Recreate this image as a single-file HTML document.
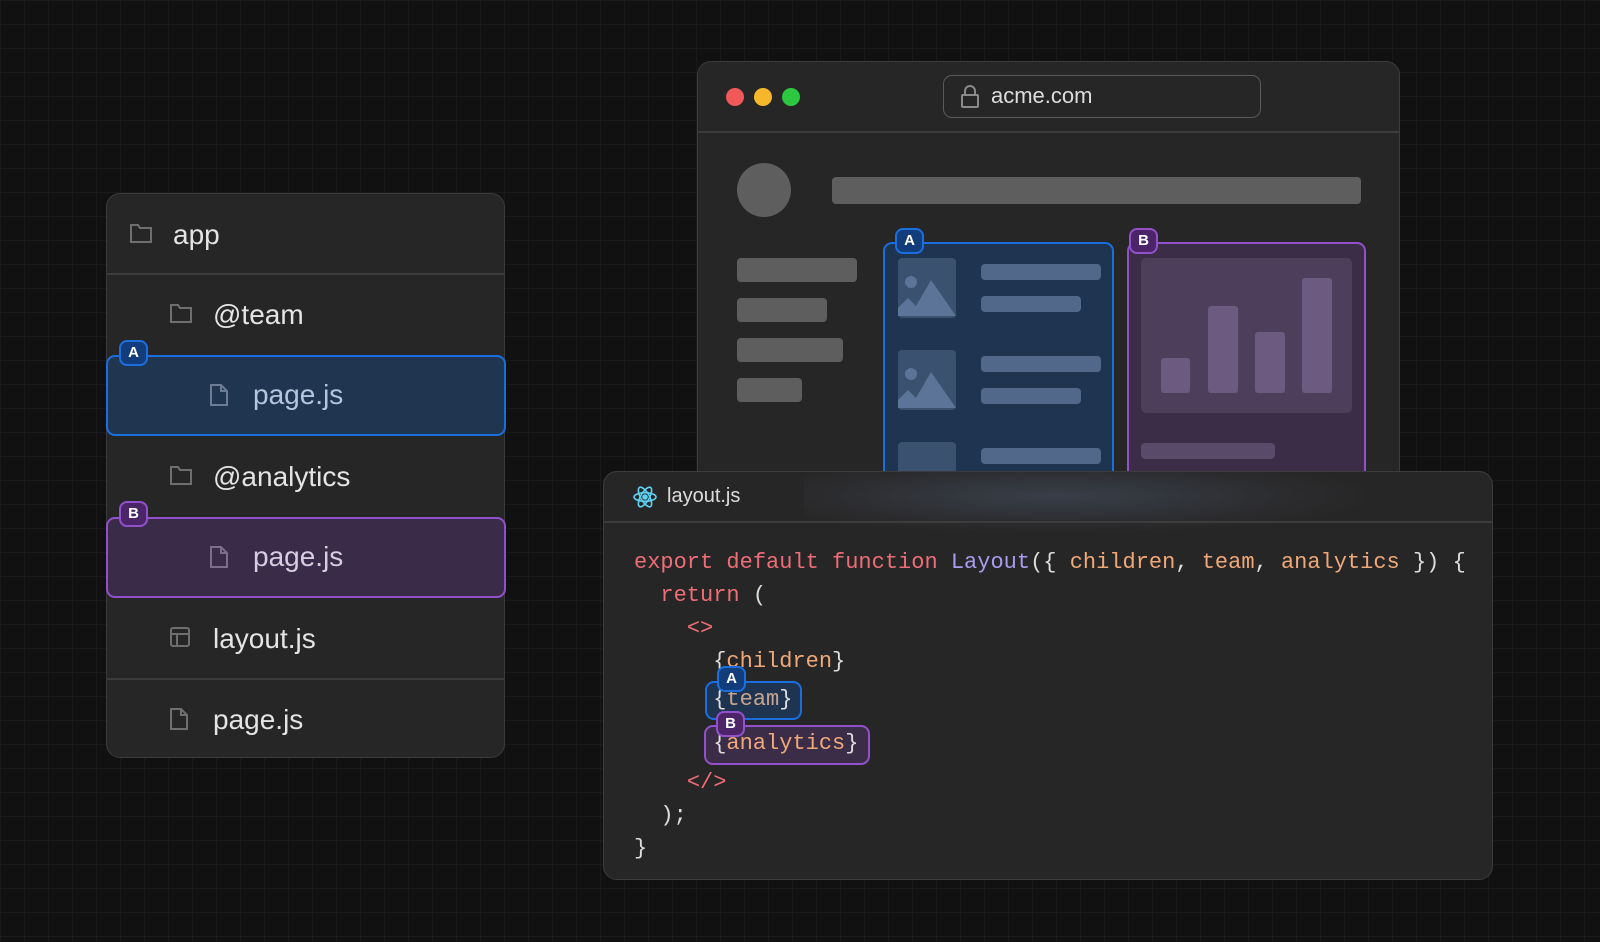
<!DOCTYPE html>
<html><head><meta charset="utf-8"><style>
*{margin:0;padding:0;box-sizing:border-box}
body{width:1600px;height:942px;overflow:hidden;background:#111;background-image:linear-gradient(#1a1a1a 1px,transparent 1px),linear-gradient(90deg,#1a1a1a 1px,transparent 1px);background-size:24px 24px;font-family:"Liberation Sans",sans-serif;position:relative}
.abs{position:absolute}
.panel{left:106px;top:193px;width:399px;height:565px;background:#262626;border:1.5px solid #3a3a3a;border-radius:14px;overflow:visible}
.row{position:absolute;left:0;width:100%;height:81px;color:#e4e4e4;font-size:28px;line-height:81px}
.row svg{position:absolute;top:28px}
.div{position:absolute;left:0;width:100%;height:1.5px;background:#3c3c3c}
.lbl{position:absolute;width:29px;height:26px;border-radius:8px;color:#fff;font-size:15px;font-weight:bold;text-align:center;line-height:22px}
.lA{background:#133d7a;border:2.5px solid #1a6fe0}
.lB{background:#4b2568;border:2.5px solid #9350cc}
.bar{position:absolute;background:#5e5e5e;border-radius:4px}
.br{position:absolute;background:#52688a;border-radius:4px}
.pb{position:absolute;background:#6d5a80;border-radius:3px}
.code{left:603px;top:471px;width:890px;height:409px;background:#262626;border:1.5px solid #3c3c3c;border-radius:14px;overflow:hidden}
pre{font-family:"Liberation Mono",monospace;font-size:22px;color:#ddd;position:absolute;left:30px;top:74px;line-height:33px}
.k{color:#ee6d76}.f{color:#a99cf0}.o{color:#f0a878}
</style></head><body>
<!-- file panel -->
<div class="abs panel">
 <div class="row" style="top:0"><svg style="left:22px" width="24" height="22" viewBox="0 0 24 22" fill="none" stroke="#6f6f6f" stroke-width="2"><path d="M2 3h7l2 3h11v14H2z"/></svg><span style="position:absolute;left:66px">app</span></div>
 <div class="div" style="top:79px"></div>
 <div class="row" style="top:80px"><svg style="left:62px" width="24" height="22" viewBox="0 0 24 22" fill="none" stroke="#6f6f6f" stroke-width="2"><path d="M2 3h7l2 3h11v14H2z"/></svg><span style="position:absolute;left:106px">@team</span></div>
 <div class="row" style="top:161px;left:-1px;width:400px;height:81px;background:#203550;border:2.5px solid #1a6fe0;border-radius:9px;line-height:76px;color:#b4c6dd"><svg style="left:101px;top:26px" width="20" height="24" viewBox="0 0 20 24" fill="none" stroke="#6b7c94" stroke-width="2"><path d="M2 2h10l6 6v14H2z M12 2v6h6"/></svg><span style="position:absolute;left:145px">page.js</span></div>
 <div class="row" style="top:242px"><svg style="left:62px" width="24" height="22" viewBox="0 0 24 22" fill="none" stroke="#6f6f6f" stroke-width="2"><path d="M2 3h7l2 3h11v14H2z"/></svg><span style="position:absolute;left:106px">@analytics</span></div>
 <div class="row" style="top:323px;left:-1px;width:400px;height:81px;background:#3a2b48;border:2.5px solid #9350cc;border-radius:9px;line-height:76px;color:#d6cde0"><svg style="left:101px;top:26px" width="20" height="24" viewBox="0 0 20 24" fill="none" stroke="#7d6e8c" stroke-width="2"><path d="M2 2h10l6 6v14H2z M12 2v6h6"/></svg><span style="position:absolute;left:145px">page.js</span></div>
 <div class="row" style="top:404px"><svg style="left:62px" width="22" height="22" viewBox="0 0 22 22" fill="none" stroke="#6f6f6f" stroke-width="2"><rect x="2" y="2" width="18" height="18" rx="2"/><path d="M2 8h18M8 8v12"/></svg><span style="position:absolute;left:106px">layout.js</span></div>
 <div class="div" style="top:484px"></div>
 <div class="row" style="top:485px"><svg style="left:62px" width="20" height="24" viewBox="0 0 20 24" fill="none" stroke="#6f6f6f" stroke-width="2"><path d="M2 2h10l6 6v14H2z M12 2v6h6"/></svg><span style="position:absolute;left:106px">page.js</span></div>
 <div class="lbl lA" style="left:12px;top:146px">A</div>
 <div class="lbl lB" style="left:12px;top:307px">B</div>
</div>
<!-- browser -->
<div class="abs" style="left:697px;top:61px;width:703px;height:440px;background:#262626;border:1.5px solid #3c3c3c;border-radius:14px;overflow:hidden">
 <div class="abs" style="left:0;top:69px;width:100%;height:1.5px;background:#3c3c3c"></div>
 <div class="abs" style="left:28px;top:26px;width:18px;height:18px;border-radius:50%;background:#f0585a"></div>
 <div class="abs" style="left:56px;top:26px;width:18px;height:18px;border-radius:50%;background:#f6b72b"></div>
 <div class="abs" style="left:84px;top:26px;width:18px;height:18px;border-radius:50%;background:#2cc840"></div>
 <div class="abs" style="left:245px;top:13px;width:318px;height:43px;border:1.5px solid #5a5a5a;border-radius:9px;color:#ddd;font-size:22px;line-height:40px;padding-left:47px">acme.com
  <svg class="abs" style="left:16px;top:9px" width="20" height="24" viewBox="0 0 20 24" fill="none" stroke="#8a8a8a" stroke-width="2"><rect x="2" y="10" width="16" height="12" rx="1"/><path d="M5 10V6a5 5 0 0 1 10 0v4"/></svg></div>
 <div class="abs" style="left:39px;top:101px;width:54px;height:54px;border-radius:50%;background:#5e5e5e"></div>
 <div class="bar" style="left:134px;top:115px;width:529px;height:27px"></div>
 <div class="bar" style="left:39px;top:196px;width:120px;height:24px"></div>
 <div class="bar" style="left:39px;top:236px;width:90px;height:24px"></div>
 <div class="bar" style="left:39px;top:276px;width:106px;height:24px"></div>
 <div class="bar" style="left:39px;top:316px;width:65px;height:24px"></div>
 <div class="abs" style="left:185px;top:180px;width:231px;height:300px;background:#1f3450;border:2.5px solid #1a6fe0;border-radius:9px">
  <div class="br" style="left:13px;top:14px;width:58px;height:60px;background:#3a5170"></div>
  <svg class="abs" style="left:13px;top:24px" width="58" height="50" viewBox="0 0 58 50"><circle cx="13" cy="14" r="6" fill="#5b7497"/><path d="M0 48L0 40L10 30L18 38L33 12L58 48Z" fill="#5b7497"/></svg>
  <div class="br" style="left:96px;top:20px;width:120px;height:16px"></div>
  <div class="br" style="left:96px;top:52px;width:100px;height:16px"></div>
  <div class="br" style="left:13px;top:106px;width:58px;height:60px;background:#3a5170"></div>
  <svg class="abs" style="left:13px;top:116px" width="58" height="50" viewBox="0 0 58 50"><circle cx="13" cy="14" r="6" fill="#5b7497"/><path d="M0 48L0 40L10 30L18 38L33 12L58 48Z" fill="#5b7497"/></svg>
  <div class="br" style="left:96px;top:112px;width:120px;height:16px"></div>
  <div class="br" style="left:96px;top:144px;width:100px;height:16px"></div>
  <div class="br" style="left:13px;top:198px;width:58px;height:60px;background:#3a5170"></div>
  <div class="br" style="left:96px;top:204px;width:120px;height:16px"></div>
 </div>
 <div class="abs" style="left:429px;top:180px;width:239px;height:300px;background:#3b2c48;border:2.5px solid #9350cc;border-radius:9px">
  <div class="abs" style="left:12px;top:14px;width:211px;height:155px;background:#4d3f5c;border-radius:5px"></div>
  <div class="pb" style="left:32px;top:114px;width:29px;height:35px"></div>
  <div class="pb" style="left:79px;top:62px;width:30px;height:87px"></div>
  <div class="pb" style="left:126px;top:88px;width:30px;height:61px"></div>
  <div class="pb" style="left:173px;top:34px;width:30px;height:115px"></div>
  <div class="abs" style="left:12px;top:199px;width:134px;height:16px;background:#5a4a6a;border-radius:4px"></div>
 </div>
 <div class="lbl lA" style="left:197px;top:166px">A</div>
 <div class="lbl lB" style="left:431px;top:166px">B</div>
</div>
<!-- code -->
<div class="abs code">
 <div class="abs" style="left:200px;top:0;width:560px;height:60px;background:radial-gradient(ellipse at 45% 40%,rgba(90,110,140,.35),rgba(80,80,100,.12) 55%,transparent 75%)"></div>
 <div class="abs" style="left:0;top:49px;width:100%;height:1.5px;background:#3c3c3c"></div>
 <svg class="abs" style="left:28px;top:13px" width="26" height="24" viewBox="-13 -12 26 24" fill="none" stroke="#5ed3f3" stroke-width="1.6"><ellipse rx="11" ry="4.3"/><ellipse rx="11" ry="4.3" transform="rotate(60)"/><ellipse rx="11" ry="4.3" transform="rotate(120)"/><circle r="2" fill="#5ed3f3"/></svg>
 <div class="abs" style="left:63px;top:13px;color:#ddd;font-size:20px">layout.js</div>
 <div class="abs" style="left:101px;top:209px;width:97px;height:39px;background:#1f3450;border:2.5px solid #1a6fe0;border-radius:9px"></div>
 <div class="abs" style="left:100px;top:253px;width:166px;height:40px;background:#3b2c48;border:2.5px solid #9350cc;border-radius:9px"></div>
<pre><span class="k">export default function</span> <span class="f">Layout</span>({ <span class="o">children</span>, <span class="o">team</span>, <span class="o">analytics</span> }) {
  <span class="k">return</span> (
    <span class="k">&lt;&gt;</span>
      {<span class="o">children</span>}
<span style="line-height:44px">      {<span class="o" style="color:#c8a590">team</span>}</span>
<span style="line-height:44px">      {<span class="o">analytics</span>}</span>
    <span class="k">&lt;/&gt;</span>
  );
}</pre>
 <div class="lbl lA" style="left:113px;top:194px">A</div>
 <div class="lbl lB" style="left:112px;top:239px">B</div>
</div>
</body></html>
